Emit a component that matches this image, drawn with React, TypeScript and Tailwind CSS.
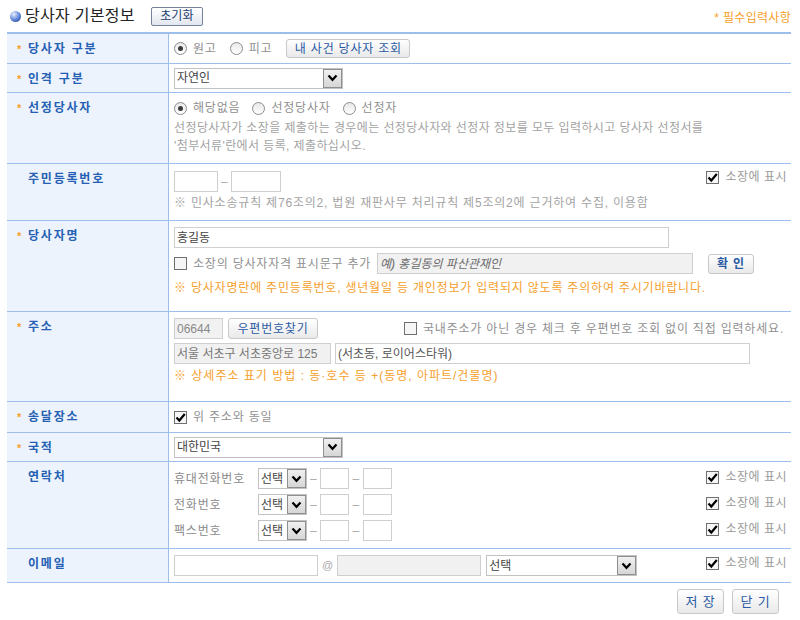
import React from 'react';

const FONT = "font-['Liberation_Sans','Noto_Sans_CJK_KR',sans-serif]";

function Radio({ checked }: { checked?: boolean }) {
    return (
        <span className="w-[13px] h-[13px] rounded-full border border-[#8c8c8c] bg-[linear-gradient(#e8e8e8,#ffffff)] flex items-center justify-center shrink-0">
            {checked && <span className="w-[5px] h-[5px] rounded-full bg-[#3a3a3a]" />}
        </span>
    );
}

function Check({ checked }: { checked?: boolean }) {
    return (
        <span className="w-[13px] h-[13px] border border-[#6f6f6f] bg-[#f6f6f6] flex items-center justify-center shrink-0">
            {checked && (
                <svg width="11" height="11" viewBox="0 0 11 11">
                    <path d="M1.5 5.5 L4.3 8.5 L9.8 2" fill="none" stroke="#000" strokeWidth="2.2" />
                </svg>
            )}
        </span>
    );
}

function Select({ w, text }: { w: string; text: string }) {
    return (
        <div className={`${w} h-[21px] border border-[#c2c2c2] bg-white flex items-center justify-between shrink-0`}>
            <span className="pl-[2px] text-[12px] leading-[14px] text-[#444] tracking-normal">{text}</span>
            <span className="w-[19px] h-[19px] border border-[#8f8f8f] bg-[linear-gradient(#f0f0f0,#d6d6d6)] flex items-center justify-center">
                <svg width="11" height="8" viewBox="0 0 11 8">
                    <path d="M1.5 1.5 L5.5 5.8 L9.5 1.5" fill="none" stroke="#000" strokeWidth="2.2" />
                </svg>
            </span>
        </div>
    );
}

function Input({ w, gray, text, italic, tone = 'text-[#555]' }: { w: string; gray?: boolean; text?: string; italic?: boolean; tone?: string }) {
    return (
        <div className={`${w} h-[21px] border border-[#cfcfcf] ${gray ? 'bg-[#f1f1f1]' : 'bg-white'} flex items-center pl-[2px] shrink-0 overflow-hidden`}>
            {text && <span className={`text-[12px] leading-[14px] whitespace-nowrap tracking-normal ${tone} ${italic ? 'italic' : ''}`}>{text}</span>}
        </div>
    );
}

function Btn({ children, className }: { children: React.ReactNode; className: string }) {
    return (
        <button className={`${className} rounded-[3px] border border-[#c8c8c8] bg-[linear-gradient(#ffffff,#e9e9e9)] leading-[14px] text-[#2a5aa3] tracking-[0.8px] flex items-center justify-center shrink-0`}>
            {children}
        </button>
    );
}

function Show() {
    return (
        <div className="flex items-center gap-[6px] pr-[4px]">
            <Check checked />
            <span className="text-[12px] leading-[13px] text-[#9a9a9a] tracking-[0.5px]">소장에 표시</span>
        </div>
    );
}

function Row({ label, req, className, children }: { label: string; req?: boolean; className: string; children: React.ReactNode }) {
    return (
        <div className={`flex border-b border-[#9dbdea] ${className}`}>
            <div className={`w-[162px] shrink-0 bg-[#edf3fc] border-r border-[#9dbdea] pt-[8px] flex items-start ${req ? 'pl-[10px]' : 'pl-[21px]'}`}>
                {req && <span className="w-[11px] text-[11px] leading-[14px] font-bold text-[#f5a02c]">*</span>}
                <span className="text-[12px] leading-[14px] font-bold tracking-[1.8px] text-[#2460b3]">{label}</span>
            </div>
            <div className="flex-1 pl-[5px] text-[12px] text-[#8f8f8f] tracking-[0.8px] whitespace-nowrap">{children}</div>
        </div>
    );
}

const Dash = () => <span className="text-[#aaa] text-[12px] px-[3px]">–</span>;

export default function App() {
    return (
        <div className={`${FONT} w-[800px] h-[620px] bg-white pl-[7px] pr-[9px]`}>
            {/* header */}
            <div className="h-[32px] flex items-center justify-between">
                <div className="flex items-center">
                    <span className="ml-[3px] w-[11px] h-[11px] rounded-full bg-[radial-gradient(circle_at_35%_30%,#e8efff,#5b82d6_55%,#213f88)]" />
                    <span className="ml-[4px] text-[16px] leading-[18px] text-[#222] tracking-[0.3px]">당사자 기본정보</span>
                    <button className="ml-[16px] w-[52px] h-[19px] rounded-[2px] border border-[#74839a] bg-[linear-gradient(#ffffff,#e2e6ee)] text-[12px] leading-[14px] text-[#1d3c70]">초기화</button>
                </div>
                <span className="text-[12px] leading-[14px] text-[#f5a02c] mt-[4px] tracking-[0.3px]">* 필수입력사항</span>
            </div>

            <div className="border-t-2 border-[#9dbdea]">
                <Row label="당사자 구분" req className="h-[30px]">
                    <div className="h-full flex items-center">
                        <Radio checked />
                        <span className="ml-[6px]">원고</span>
                        <span className="ml-[13px]"><Radio /></span>
                        <span className="ml-[6px]">피고</span>
                        <Btn className="ml-[14px] w-[124px] h-[19px] text-[12px]">내 사건 당사자 조회</Btn>
                    </div>
                </Row>

                <Row label="인격 구분" req className="h-[29px]">
                    <div className="h-full flex items-center">
                        <Select w="w-[169px]" text="자연인" />
                    </div>
                </Row>

                <Row label="선정당사자" req className="h-[71px]">
                    <div className="pt-[8px]">
                        <div className="flex items-center h-[14px]">
                            <Radio checked />
                            <span className="ml-[6px]">해당없음</span>
                            <span className="ml-[12px]"><Radio /></span>
                            <span className="ml-[6px]">선정당사자</span>
                            <span className="ml-[12px]"><Radio /></span>
                            <span className="ml-[6px]">선정자</span>
                        </div>
                        <p className="mt-[4px] leading-[18px] text-[#a3a3a3] tracking-[0.4px]">
                            선정당사자가 소장을 제출하는 경우에는 선정당사자와 선정자 정보를 모두 입력하시고 당사자 선정서를
                            <br />
                            '첨부서류'란에서 등록, 제출하십시오.
                        </p>
                    </div>
                </Row>

                <Row label="주민등록번호" className="h-[57px]">
                    <div className="pt-[7px]">
                        <div className="flex items-start justify-between">
                            <div className="flex items-center">
                                <Input w="w-[44px]" />
                                <Dash />
                                <Input w="w-[50px]" />
                            </div>
                            <Show />
                        </div>
                        <p className="mt-[3px] leading-[16px] text-[#a3a3a3]">※ 민사소송규칙 제76조의2, 법원 재판사무 처리규칙 제5조의2에 근거하여 수집, 이용함</p>
                    </div>
                </Row>

                <Row label="당사자명" req className="h-[91px]">
                    <div className="pt-[6px]">
                        <div className="w-[495px] h-[21px] border border-[#cfcfcf] flex items-center pl-[2px]">
                            <span className="text-[#444] leading-[14px] tracking-normal">홍길동</span>
                        </div>
                        <div className="mt-[5px] flex items-center">
                            <Check />
                            <span className="ml-[6px] w-[184px]">소장의 당사자자격 표시문구 추가</span>
                            <Input w="w-[316px]" gray italic text="예) 홍길동의 파산관재인" tone="text-[#6a6a6a]" />
                            <Btn className="ml-[15px] w-[46px] h-[20px] text-[12px] font-bold">확 인</Btn>
                        </div>
                        <p className="mt-[6px] leading-[16px] text-[#f5a02c]">※ 당사자명란에 주민등록번호, 생년월일 등 개인정보가 입력되지 않도록 주의하여 주시기바랍니다.</p>
                    </div>
                </Row>

                <Row label="주소" req className="h-[90px]">
                    <div className="pt-[6px]">
                        <div className="flex items-center">
                            <Input w="w-[49px]" gray text="06644" tone="text-[#8a8a8a]" />
                            <Btn className="ml-[5px] w-[90px] h-[21px] text-[12px]">우편번호찾기</Btn>
                            <span className="ml-[86px]"><Check /></span>
                            <span className="ml-[6px]">국내주소가 아닌 경우 체크 후 우편번호 조회 없이 직접 입력하세요.</span>
                        </div>
                        <div className="mt-[4px] flex items-center">
                            <Input w="w-[157px]" gray text="서울 서초구 서초중앙로 125" tone="text-[#777]" />
                            <span className="ml-[4px]"><Input w="w-[415px]" text="(서초동, 로이어스타워)" tone="text-[#555]" /></span>
                        </div>
                        <p className="mt-[4px] leading-[16px] text-[#f5a02c] tracking-[1px]">※ 상세주소 표기 방법 : 동·호수 등 +(동명, 아파트/건물명)</p>
                    </div>
                </Row>

                <Row label="송달장소" req className="h-[31px]">
                    <div className="h-full flex items-center">
                        <Check checked />
                        <span className="ml-[6px]">위 주소와 동일</span>
                    </div>
                </Row>

                <Row label="국적" req className="h-[29px]">
                    <div className="h-full flex items-center">
                        <Select w="w-[169px]" text="대한민국" />
                    </div>
                </Row>

                <Row label="연락처" className="h-[87px]">
                    <div className="pt-[6px] flex flex-col gap-[5px]">
                        {['휴대전화번호', '전화번호', '팩스번호'].map((t) => (
                            <div key={t} className="flex items-start justify-between">
                                <div className="flex items-center">
                                    <span className="w-[84px] text-[#8a8a8a]">{t}</span>
                                    <Select w="w-[49px]" text="선택" />
                                    <Dash />
                                    <Input w="w-[29px]" />
                                    <Dash />
                                    <Input w="w-[29px]" />
                                </div>
                                <div className="mt-[3px]"><Show /></div>
                            </div>
                        ))}
                    </div>
                </Row>

                <Row label="이메일" className="h-[34px]">
                    <div className="pt-[6px] flex items-start justify-between">
                        <div className="flex items-center">
                            <Input w="w-[144px]" />
                            <span className="mx-[4px] text-[11px] text-[#aaa] tracking-normal">@</span>
                            <Input w="w-[144px]" gray />
                            <span className="ml-[5px]"><Select w="w-[151px]" text="선택" /></span>
                        </div>
                        <div className="mt-[2px]"><Show /></div>
                    </div>
                </Row>
            </div>

            <div className="mt-[6px] flex justify-end gap-[8px] pr-[12px]">
                <Btn className="w-[47px] h-[25px] text-[13px]">저 장</Btn>
                <Btn className="w-[47px] h-[25px] text-[13px]">닫 기</Btn>
            </div>
        </div>
    );
}
